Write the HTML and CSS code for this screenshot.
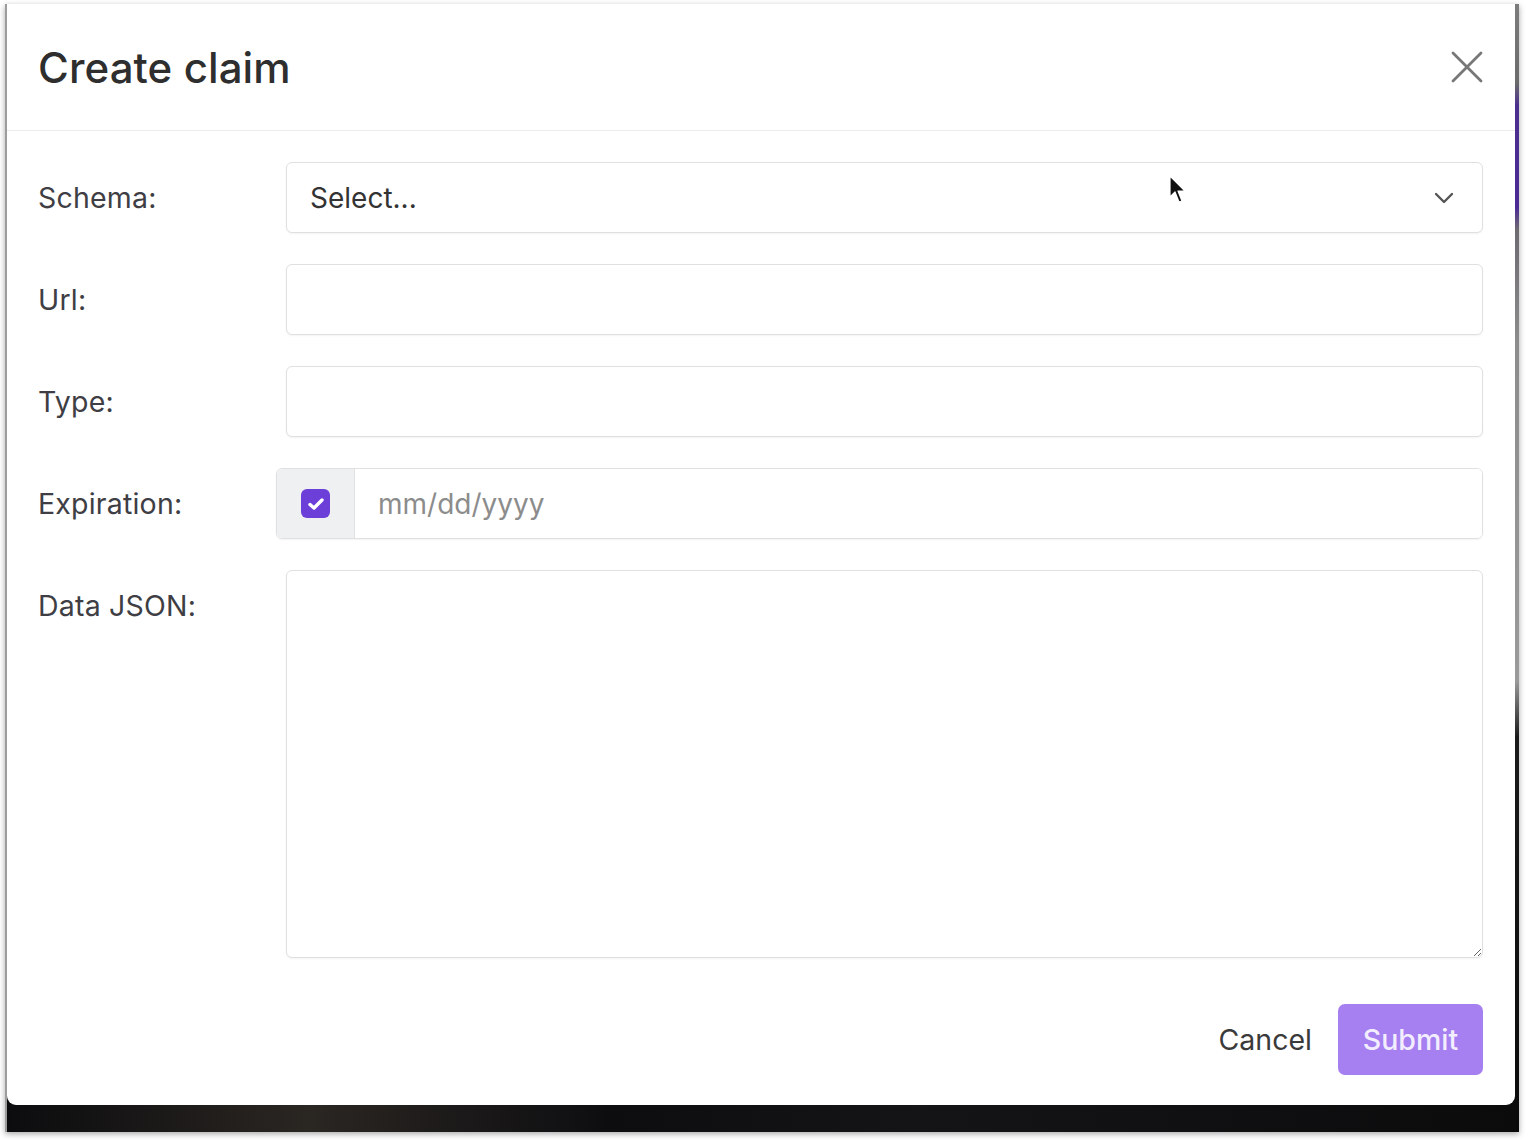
FILE: index.html
```html
<!DOCTYPE html>
<html lang="en">
<head>
<meta charset="utf-8">
<title>Create claim</title>
<link rel="stylesheet" href="styles.css">
</head>
<body>
<div class="frame">
  <div class="modal">
    <div class="modal-header">
      <h1 class="title">Create claim</h1>
      <button class="close" aria-label="Close">
        <svg width="32" height="32" viewBox="0 0 32 32"><path d="M2 2 L30 30 M30 2 L2 30" stroke="#777" stroke-width="2.8" stroke-linecap="round" fill="none"/></svg>
      </button>
    </div>
    <div class="modal-body">
      <label class="label">Schema:</label>
      <div class="control select">
        <span class="select-text">Select...</span>
        <svg class="chevron" width="20" height="12" viewBox="0 0 20 12"><path d="M2 2 L10 10 L18 2" stroke="#555" stroke-width="2.4" fill="none" stroke-linecap="round" stroke-linejoin="round"/></svg>
      </div>

      <label class="label">Url:</label>
      <input class="control" type="text">

      <label class="label">Type:</label>
      <input class="control" type="text">

      <label class="label">Expiration:</label>
      <div class="group">
        <span class="addon"><span class="checkbox"><svg width="18" height="14" viewBox="0 0 18 14"><path d="M3 7.5 L7 11 L15 3" stroke="#fff" stroke-width="3.4" fill="none" stroke-linecap="round" stroke-linejoin="round"/></svg></span></span>
        <input class="date" type="text" placeholder="mm/dd/yyyy">
      </div>

      <label class="label">Data JSON:</label>
      <textarea class="control textarea"></textarea>
    </div>
    <div class="modal-footer">
      <button class="cancel">Cancel</button>
      <button class="submit">Submit</button>
    </div>
  </div>
  <div class="strip"></div>
  <svg class="cursor" width="20" height="30" viewBox="0 0 20 30"><path d="M2 1 L2 22 L7 17 L11 27 L14 26 L10 16 L17 16 Z" fill="#111" stroke="#fff" stroke-width="1.2" stroke-linejoin="round"/></svg>
</div>
</body>
</html>
```

FILE: styles.css
```css
* { box-sizing: border-box; }

html, body {
  margin: 0;
  padding: 0;
  background: #ffffff;
  font-family: Inter, "Noto Sans", "Liberation Sans", sans-serif;
}

body {
  width: 1528px;
  height: 1140px;
  overflow: hidden;
}

.frame {
  position: relative;
  margin: 4px 0 0 5px;
  width: 1514px;
  height: 1128px;
  display: flex;
  align-items: flex-start;
  background: linear-gradient(90deg, #0c0c0e 0%, #2a2622 20%, #0d0d10 40%, #141416 60%, #0b0b0c 100%);
  border-left: 2px solid #9c9c9c;
  box-shadow: 0 2px 6px rgba(0, 0, 0, 0.35);
}

.modal {
  width: 1508px;
  height: 1101px;
  background: #ffffff;
  border-radius: 0 0 9px 9px;
  display: flex;
  flex-direction: column;
}

.strip {
  width: 4px;
  height: 1128px;
  background: linear-gradient(180deg, #7c7c7c 0%, #6b6b6b 7%, #4b2f8e 9%, #4b2a95 18%, #6d6a70 20%, #8c8c8c 30%, #9a9a9a 60%, #1a1a1a 65%, #0a0a0a 100%);
}

.modal-header {
  height: 127px;
  padding: 0 32px 0 31px;
  display: flex;
  align-items: center;
  justify-content: space-between;
  border-bottom: 1px solid #ececec;
}

.title {
  margin: 0;
  font-size: 42px;
  font-weight: 450;
  color: #2e2e2e;
  letter-spacing: 0.1px;
}

.close {
  border: 0;
  background: none;
  padding: 0;
  width: 32px;
  height: 32px;
  display: flex;
}

.modal-body {
  padding: 31px 32px 0 31px;
  display: grid;
  grid-template-columns: 248px 1fr;
  row-gap: 31px;
}

.label {
  font-size: 28.5px;
  line-height: 71px;
  color: #3e3e44;
  letter-spacing: 0.2px;
}

.control {
  height: 71px;
  border: 1.5px solid #e0e0e0;
  border-radius: 6px;
  background: #fff;
  box-shadow: 0 1px 2px rgba(0, 0, 0, 0.05);
  font: inherit;
  font-size: 28px;
  outline: none;
  padding: 0 24px;
}

.select {
  display: flex;
  align-items: center;
  justify-content: space-between;
  padding: 0 28px 0 23px;
}

.select-text {
  color: #333;
  font-size: 28px;
}

.group {
  margin-left: -10px;
  height: 71px;
  display: flex;
  border: 1.5px solid #e0e0e0;
  border-radius: 6px;
  overflow: hidden;
  box-shadow: 0 1px 2px rgba(0, 0, 0, 0.05);
}

.addon {
  width: 78px;
  background: #eff0f2;
  border-right: 1.5px solid #e2e2e2;
  display: flex;
  align-items: center;
  justify-content: center;
}

.checkbox {
  width: 29px;
  height: 29px;
  border-radius: 6px;
  background: #6c3fd9;
  display: flex;
  align-items: center;
  justify-content: center;
}

.date {
  flex: 1;
  border: 0;
  outline: none;
  font: inherit;
  font-size: 28px;
  padding: 0 23px;
  color: #333;
  background: #fff;
}

.date::placeholder {
  color: #8c8c8c;
}

.textarea {
  height: 388px;
  resize: vertical;
  padding: 16px 24px;
}

.modal-footer {
  margin-top: auto;
  padding: 0 32px 30px;
  display: flex;
  justify-content: flex-end;
  align-items: center;
  gap: 26px;
}

.cancel {
  border: 0;
  background: none;
  padding: 0;
  font: inherit;
  font-size: 28.5px;
  color: #3a3a3a;
}

.submit {
  height: 71px;
  width: 145px;
  border: 0;
  border-radius: 7px;
  background: #a67ff0;
  color: #f3eeff;
  font: inherit;
  font-size: 28.5px;
  font-weight: 500;
}

.cursor {
  position: absolute;
  left: 1161px;
  top: 171px;
}
```
